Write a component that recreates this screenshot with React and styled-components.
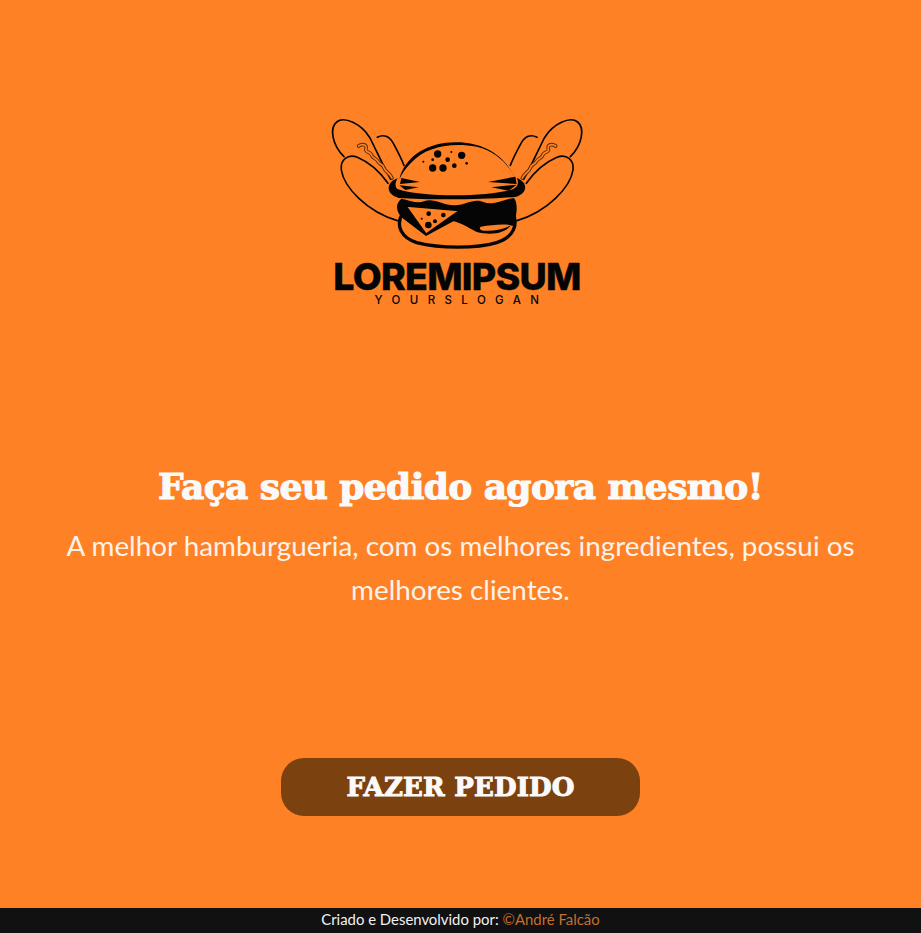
import styled, { createGlobalStyle } from "styled-components";

const GlobalStyle = createGlobalStyle`
  * {
    box-sizing: border-box;
    margin: 0;
    padding: 0;
  }
  body {
    background: #ff8125;
    font-family: "Lato", sans-serif;
  }
`;

const Page = styled.div`
  display: flex;
  flex-direction: column;
  height: 933px;
  overflow: hidden;
`;

const Main = styled.main`
  flex: 1;
  display: flex;
  flex-direction: column;
  align-items: center;
  padding-top: 110px;
`;

const Logo = styled.div`
  display: flex;
  flex-direction: column;
  align-items: center;
  width: 275px;
  margin-left: -7px;
  color: #050505;
`;

const LogoName = styled.div`
  font-family: "Inter", sans-serif;
  font-size: 37.5px;
  font-weight: 800;
  line-height: 30px;
  letter-spacing: -0.75px;
  margin-top: 7px;
  -webkit-text-stroke: 0.4px #050505;
  white-space: nowrap;
`;

const LogoSlogan = styled.div`
  font-family: "Inter", sans-serif;
  font-size: 11.5px;
  font-weight: 500;
  line-height: 11px;
  letter-spacing: 9.4px;
  margin-top: 3px;
  margin-right: -9px;
  white-space: nowrap;
`;

const Headline = styled.h1`
  margin-top: 156px;
  color: #fafafa;
  font-family: "DejaVu Serif", serif;
  font-size: 36px;
  font-weight: 700;
  line-height: 48px;
  letter-spacing: -0.6px;
  -webkit-text-stroke: 1.1px #fafafa;
  white-space: nowrap;
`;

const Tagline = styled.p`
  width: 800px;
  margin-top: 14px;
  color: #fbf3ea;
  font-size: 27.85px;
  line-height: 44px;
  text-align: center;
`;

const OrderButton = styled.button`
  width: 359px;
  height: 58px;
  margin-top: 146px;
  border: none;
  border-radius: 23px;
  background: #7b410f;
  color: #fafafa;
  font-family: "DejaVu Serif", serif;
  font-size: 26px;
  font-weight: 700;
  letter-spacing: 0.2px;
  -webkit-text-stroke: 1px #fafafa;
`;

const Footer = styled.footer`
  display: flex;
  justify-content: center;
  align-items: center;
  gap: 4px;
  height: 25px;
  padding-bottom: 3px;
  background: #111111;
  color: #f2f2f2;
  font-size: 14.9px;
`;

const FooterLink = styled.a`
  color: #c4702c;
`;

const sausage =
  "M116 108C126 100 142 104 138 116C134 128 150 124 154 134C158 146 168 144 174 154C180 166 190 162 192 174C196 186 210 190 216 204";

function HotDog() {
  return (
    <g fill="none" stroke="#050505" strokeWidth="5" strokeLinecap="round" strokeLinejoin="round">
      <path d="M172 82C190 72 208 78 220 100C232 122 244 146 252 166" />
      <path d="M212 208C192 172 172 128 150 84C124 40 72 18 50 36C28 54 36 104 72 140" />
      <path d="M204 220C180 186 150 158 112 142C84 130 60 150 64 180C72 232 140 304 232 332" />
      <path d={sausage} stroke="#5a2c08" strokeWidth="11" />
      <path d={sausage} stroke="#ff8125" strokeWidth="5" />
    </g>
  );
}

function BurgerLogo() {
  return (
    <svg width="275" height="145" viewBox="0 0 825 435">
      <HotDog />
      <g transform="translate(823 0) scale(-1 1)">
        <HotDog />
      </g>
      {/* bottom bun */}
      <path
        d="M246 312C226 350 246 384 290 398C360 416 470 416 530 398C580 382 596 346 578 306Z"
        fill="#ff8125"
        stroke="#050505"
        strokeWidth="10"
      />
      {/* lettuce and patty */}
      <path
        d="M244 266C268 270 290 282 312 274C340 262 372 288 405 286C440 284 462 264 490 276C520 288 556 266 582 264C596 280 590 326 578 348C560 340 520 344 482 350C476 356 482 362 492 362C520 364 550 358 572 346C556 372 510 376 470 366C440 350 420 338 400 334L318 378L250 326C228 310 224 282 244 266Z"
        fill="#050505"
      />
      {/* cheese */}
      <path d="M258 288L418 302L318 372Z" fill="#ff8125" stroke="#050505" strokeWidth="4" strokeLinejoin="round" />
      <circle cx="325" cy="345" r="10" fill="#050505" />
      <circle cx="345" cy="334" r="6" fill="#050505" />
      <circle cx="326" cy="311" r="7" fill="#050505" />
      <circle cx="370" cy="315" r="7" fill="#050505" />
      <circle cx="305" cy="326" r="3" fill="#050505" />
      {/* bun rim */}
      <path
        d="M236 204C198 214 194 252 236 264C320 270 500 270 590 260C626 246 622 216 590 204Z"
        fill="#050505"
      />
      {/* top bun */}
      <path
        d="M250 180C280 128 340 102 410 102C486 102 548 132 578 186C594 206 604 224 578 238C500 262 310 262 234 238C216 226 234 200 250 180Z"
        fill="#ff8125"
      />
      <path
        d="M238 208C256 134 330 96 410 97C490 97 556 136 588 210C570 168 530 124 470 110C400 98 320 106 272 160C256 176 246 192 238 208Z"
        fill="#050505"
      />
      {/* crumb shading on the edge of the bun */}
      <path d="M244 204L300 216L240 222Z" fill="#050505" />
      <path d="M238 226L296 232L256 240Z" fill="#050505" />
      <path d="M586 200L504 216L590 222Z" fill="#050505" />
      <path d="M590 224L514 232L566 242Z" fill="#050505" />
      <circle cx="353" cy="132" r="11" fill="#050505" />
      <circle cx="425" cy="136" r="11" fill="#050505" />
      <circle cx="338" cy="174" r="11" fill="#050505" />
      <circle cx="369" cy="174" r="11" fill="#050505" />
      <circle cx="383" cy="149" r="7" fill="#050505" />
      <circle cx="403" cy="167" r="7" fill="#050505" />
      <circle cx="338" cy="149" r="4" fill="#050505" />
      <circle cx="394" cy="126" r="3" fill="#050505" />
      <circle cx="440" cy="160" r="4" fill="#050505" />
      <circle cx="310" cy="155" r="3" fill="#050505" />
    </svg>
  );
}

export default function App() {
  return (
    <>
      <GlobalStyle />
      <Page>
        <Main>
          <Logo>
            <BurgerLogo />
            <LogoName>LOREMIPSUM</LogoName>
            <LogoSlogan>YOURSLOGAN</LogoSlogan>
          </Logo>
          <Headline>Faça seu pedido agora mesmo!</Headline>
          <Tagline>
            A melhor hamburgueria, com os melhores ingredientes, possui os melhores clientes.
          </Tagline>
          <OrderButton>FAZER PEDIDO</OrderButton>
        </Main>
        <Footer>
          Criado e Desenvolvido por:
          <FooterLink>©André Falcão</FooterLink>
        </Footer>
      </Page>
    </>
  );
}
